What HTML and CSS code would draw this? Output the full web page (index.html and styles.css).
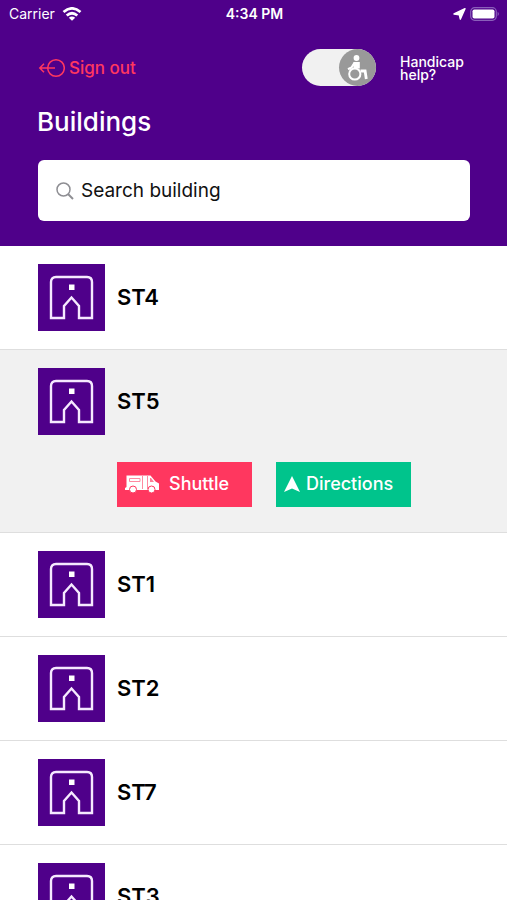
FILE: index.html
```html
<!DOCTYPE html>
<html lang="en">
<head>
<meta charset="utf-8">
<meta name="viewport" content="width=device-width, initial-scale=1">
<title>Buildings</title>
<link rel="stylesheet" href="styles.css">
</head>
<body>
<svg class="sprite" aria-hidden="true">
  <symbol id="building" viewBox="0 0 67 67">
    <path d="M13 54V18q0-5 5-5h31q5 0 5 5v36H41V42l-7.500-8.500L26 42v12Z" fill="none" stroke="#f6e9ff" stroke-width="2.400"/>
    <path d="M31 20.500h5.500V26H31Z" fill="#fff"/>
  </symbol>
</svg>
<div class="app">
  <header class="header">
    <div class="status">
      <span class="carrier">Carrier
        <svg width="20" height="14" viewBox="0 0 20 14" fill="none" stroke="#fff" stroke-width="2.800" aria-hidden="true">
          <path d="M1.500 5Q10-2.200 18.500 5M4.700 8.500q5.300-4.400 10.600 0"/>
          <path d="M10 13.700 6.800 10.700q3.200-2.400 6.400 0Z" fill="#fff" stroke="none"/>
        </svg>
      </span>
      <span class="time">4:34 PM</span>
      <span class="indicators">
        <svg width="13" height="12" viewBox="0 0 13 12" aria-hidden="true"><path d="M12 .7 7.300 11.200 6.300 6.800 1 6Z" fill="#fff" stroke="#fff" stroke-width="1.400" stroke-linejoin="round"/></svg>
        <svg width="30" height="14" viewBox="0 0 30 14" aria-hidden="true">
          <rect x=".7" y=".7" width="25.600" height="12.600" rx="4" fill="none" stroke="#8a5fba" stroke-width="1.200"/>
          <rect x="2.500" y="2.500" width="22" height="9" rx="1.800" fill="#fff"/>
          <path d="M27.600 4.800q2.600 2.200 0 4.400Z" fill="#8a5fba"/>
        </svg>
      </span>
    </div>
    <div class="tools">
      <a class="signout" href="#">
        <svg width="27" height="20" viewBox="0 0 27 20" fill="none" stroke="#ff375f" stroke-width="1.500" aria-hidden="true">
          <circle cx="18" cy="10" r="8.300"/>
          <path d="M17 10H2M6 5.800 1.800 10 6 14.200"/>
        </svg>
        Sign out
      </a>
      <label class="help">
        <input class="toggle-input" type="checkbox" checked>
        <span class="toggle">
          <span class="knob">
            <svg width="30" height="30" viewBox="0 0 30 30" fill="none" stroke="#fff" aria-hidden="true">
              <circle cx="13.500" cy="5" r="2.900" fill="#fff" stroke="none"/>
              <path d="M10.500 9h6.300v6.500h-6.300Z" fill="#fff" stroke="none"/>
              <path d="m11.500 9.800-3 4.700-3.500 1.800" stroke-width="2.200"/>
              <circle cx="11.800" cy="21" r="5.600" stroke-width="2"/>
              <path d="M17.500 18h4.600l1.200 8" stroke-width="2.800"/>
            </svg>
          </span>
        </span>
        <span class="help-text">Handicap help?</span>
      </label>
    </div>
    <h1 class="title">Buildings</h1>
    <label class="search">
      <svg width="18" height="18" viewBox="0 0 18 18" fill="none" stroke="#8e8e93" stroke-width="1.500" aria-hidden="true">
        <circle cx="7.500" cy="7.500" r="6.500"/>
        <path d="m12 12 5 5" stroke-width="2"/>
      </svg>
      <input class="search-input" type="text" placeholder="Search building" aria-label="Search building">
    </label>
  </header>
  <main class="list">
    <section class="row">
      <svg class="thumb" aria-hidden="true"><use href="#building"/></svg>
      <h2 class="name">ST4</h2>
    </section>
    <section class="row selected">
      <svg class="thumb" aria-hidden="true"><use href="#building"/></svg>
      <h2 class="name">ST5</h2>
      <div class="actions">
        <button class="action shuttle" type="button">
          <svg width="34" height="20" viewBox="0 0 34 20" aria-hidden="true">
            <path d="M1.500 1.500h24l5 6 3.500 2V16H0v-2l1.500-1Z" fill="#fff"/>
            <path d="M4.500 4.500h10.500v3H4.500ZM17.500 2v13M22.500 2v13" fill="none" stroke="#ff8aa1"/>
            <path d="M25 4h1l3 4h-4Z" fill="#ff7d97"/>
            <g fill="#fff" stroke="#ff375f"><circle cx="8" cy="15.500" r="3.500"/><circle cx="26.500" cy="15.500" r="3.500"/></g>
          </svg>
          Shuttle
        </button>
        <button class="action directions" type="button">
          <svg width="16" height="16" viewBox="0 0 16 16" aria-hidden="true"><path d="m8 0 8 16-8-3.500L0 16Z" fill="#fff"/></svg>
          Directions
        </button>
      </div>
    </section>
    <section class="row">
      <svg class="thumb" aria-hidden="true"><use href="#building"/></svg>
      <h2 class="name">ST1</h2>
    </section>
    <section class="row">
      <svg class="thumb" aria-hidden="true"><use href="#building"/></svg>
      <h2 class="name">ST2</h2>
    </section>
    <section class="row">
      <svg class="thumb" aria-hidden="true"><use href="#building"/></svg>
      <h2 class="name">ST7</h2>
    </section>
    <section class="row">
      <svg class="thumb" aria-hidden="true"><use href="#building"/></svg>
      <h2 class="name">ST3</h2>
    </section>
  </main>
</div>
</body>
</html>
```

FILE: styles.css
```css
* {
  box-sizing: border-box;
}

body {
  margin: 0;
  background: #fff;
  color: #000;
  font-family: Inter, "Liberation Sans", sans-serif;
}

svg {
  display: block;
  flex: none;
}

.sprite {
  position: absolute;
  width: 0;
  height: 0;
}

.app {
  display: flex;
  flex-direction: column;
  height: 100vh;
}

.header {
  flex: none;
  padding-bottom: 25px;
  background: #4f008a;
  color: #fff;
}

.status {
  display: grid;
  grid-template-columns: 1fr auto 1fr;
  align-items: center;
  height: 27px;
  padding: 0 7px 0 9px;
  font-size: 14px;
  line-height: 20px;
}

.carrier,
.indicators {
  display: flex;
  align-items: center;
  gap: 7px;
}

.time {
  font-weight: 600;
}

.indicators {
  justify-content: flex-end;
  gap: 4px;
}

.tools {
  display: flex;
  justify-content: space-between;
  align-items: center;
  margin-top: 22px;
  padding: 0 36px 0 38px;
}

.signout {
  display: flex;
  align-items: center;
  gap: 4px;
  color: #ff375f;
  font-size: 17px;
  line-height: 24px;
  font-weight: 500;
  text-decoration: none;
}

.help {
  display: flex;
  align-items: center;
  gap: 24px;
  cursor: pointer;
}

.toggle-input {
  position: absolute;
  opacity: 0;
}

.toggle {
  display: flex;
  width: 74px;
  border-radius: 19px;
  background: #f1f1f1;
}

.toggle-input:checked + .toggle {
  justify-content: flex-end;
}

.toggle-input:focus-visible + .toggle {
  outline: 2px solid #fff;
}

.knob {
  display: grid;
  place-items: center;
  width: 37px;
  height: 37px;
  border-radius: 50%;
  background: #999;
}

.help-text {
  width: 71px;
  font-size: 14px;
  line-height: 13px;
  font-weight: 500;
}

.title {
  margin: 20px 37px 22px;
  font-size: 26px;
  line-height: 32px;
  font-weight: 500;
}

.search {
  display: flex;
  align-items: center;
  gap: 7px;
  height: 61px;
  margin: 0 37px 0 38px;
  padding: 0 18px;
  border-radius: 6px;
  background: #fff;
}

.search-input {
  flex: 1;
  min-width: 0;
  padding: 0;
  border: 0;
  outline: 0;
  background: none;
  color: #111;
  font: 19px/28px Inter, "Liberation Sans", sans-serif;
}

.search-input::placeholder {
  color: #111;
  opacity: 1;
}

.list {
  flex: 1;
  min-height: 0;
  overflow-y: auto;
  scrollbar-width: none;
}

.row {
  display: grid;
  grid-template-columns: 67px 1fr;
  align-items: center;
  gap: 27px 12px;
  padding: 18px 37px 18px 38px;
  border-bottom: 1px solid #dedede;
}

.selected {
  padding-bottom: 25px;
  background: #f1f1f1;
}

.thumb {
  width: 67px;
  height: 67px;
  background: #4f008a;
}

.name {
  margin: 0 0 2px;
  font-size: 22px;
  line-height: 28px;
  font-weight: 600;
}

.actions {
  grid-column: 2;
  display: flex;
  gap: 24px;
}

.action {
  display: flex;
  align-items: center;
  width: 135px;
  height: 45px;
  padding: 0 0 2px 8px;
  border: 0;
  color: #fff;
  font: 500 18px/24px Inter, "Liberation Sans", sans-serif;
  cursor: pointer;
}

.shuttle {
  gap: 10px;
  background: #ff375f;
}

.directions {
  gap: 6px;
  background: #00c48c;
}
```
